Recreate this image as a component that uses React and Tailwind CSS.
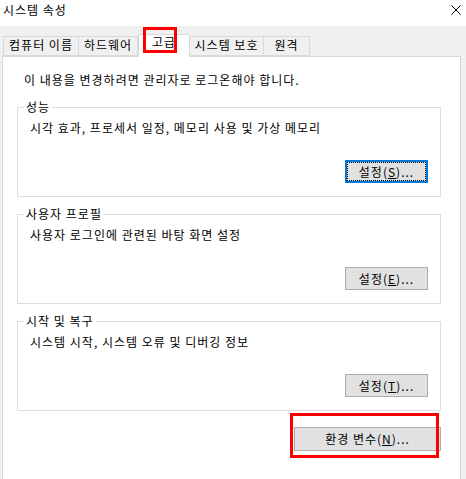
import React from "react";

const font = { fontFamily: '"Noto Sans CJK KR", "Noto Sans", sans-serif' };

const Btn = ({ label, hot, rest, focused }) => (
  <div
    className={`flex h-[23px] w-[83px] items-center justify-center bg-[#e1e1e1] text-[12px] text-black ${
      focused ? "border-2 border-[#0078d7]" : "border border-[#adadad]"
    }`}
  >
    <div className={`flex h-full w-full items-center justify-center ${focused ? "border border-dotted border-black" : ""}`}>
      {label}(<span className="underline">{hot}</span>){rest}
    </div>
  </div>
);

const Group = ({ title, desc, hot, focused }) => (
  <div className="relative ml-[14px] h-[90px] w-[424px] border border-[#dcdcdc]">
    <span className="absolute -top-[9px] left-[6px] bg-white px-[2px] text-[12px] leading-[16px] text-black">
      {title}
    </span>
    <div className="pl-[12px] pt-[12px] text-[12px] leading-[16px] text-black">{desc}</div>
    <div className="absolute right-[12px] top-[52px]">
      <Btn label="설정" hot={hot} rest="..." focused={focused} />
    </div>
  </div>
);

const Tab = ({ children, active, w }) =>
  active ? (
    <div
      className={`${w} -mt-[3px] -mb-px z-10 flex h-[23px] items-start justify-center border border-b-0 border-[#d9d9d9] bg-white pt-0 text-[12px] leading-[14px] text-black`}
    >
      {children}
    </div>
  ) : (
    <div
      className={`${w} flex h-[20px] items-center justify-center border border-[#d9d9d9] bg-[#f0f0f0] -ml-px first:ml-0 pb-[2px] text-[12px] leading-[14px] text-black`}
    >
      {children}
    </div>
  );

export default function App() {
  return (
    <div
      className="relative flex h-[479px] w-[466px] flex-col overflow-hidden bg-[#f0f0f0] tracking-[1px]"
      style={font}
    >
      {/* title bar */}
      <div className="flex h-[26px] items-center justify-between bg-white pl-[3px] pr-[4px] text-[12px] text-black">
        <span className="-mt-[6px]">시스템 속성</span>
        <svg width="10" height="10" viewBox="0 0 10 10" className="-mt-[6px] mr-[1px]">
          <path d="M0.5 0.5 L9.5 9.5 M9.5 0.5 L0.5 9.5" stroke="#000" strokeWidth="1" />
        </svg>
      </div>

      {/* tabs */}
      <div className="flex items-end pl-[3px] pt-[10px]">
        <Tab w="w-[76px]">컴퓨터 이름</Tab>
        <Tab w="w-[60px]">하드웨어</Tab>
        <Tab active w="w-[52px]">고급</Tab>
        <Tab w="w-[75px]">시스템 보호</Tab>
        <Tab w="w-[47px]">원격</Tab>
      </div>

      {/* panel */}
      <div className="ml-[2px] flex w-[459px] flex-1 flex-col border border-b-0 border-[#d9d9d9] bg-white">
        <div className="pl-[21px] pt-[15px] text-[12px] leading-[16px] text-black">
          이 내용을 변경하려면 관리자로 로그온해야 합니다.
        </div>
        <div className="mt-[19px] flex flex-col gap-[17px]">
          <Group title="성능" desc="시각 효과, 프로세서 일정, 메모리 사용 및 가상 메모리" hot="S" focused />
          <Group title="사용자 프로필" desc="사용자 로그인에 관련된 바탕 화면 설정" hot="E" />
          <Group title="시작 및 복구" desc="시스템 시작, 시스템 오류 및 디버깅 정보" hot="T" />
        </div>
        <div className="mt-[16px] flex justify-end pr-[19px]">
          <div className="flex h-[24px] w-[147px] items-center justify-center border border-[#adadad] bg-[#e1e1e1] text-[12px] text-black">
            환경 변수(<span className="underline">N</span>)...
          </div>
        </div>
      </div>

      {/* annotation boxes */}
      <div className="absolute left-[143px] top-[27px] z-20 h-[26px] w-[34px] border-[3px] border-[#ff0000]" />
      <div className="absolute left-[290px] top-[413px] z-20 h-[45px] w-[149px] border-[3px] border-[#ff0000]" />
    </div>
  );
}
